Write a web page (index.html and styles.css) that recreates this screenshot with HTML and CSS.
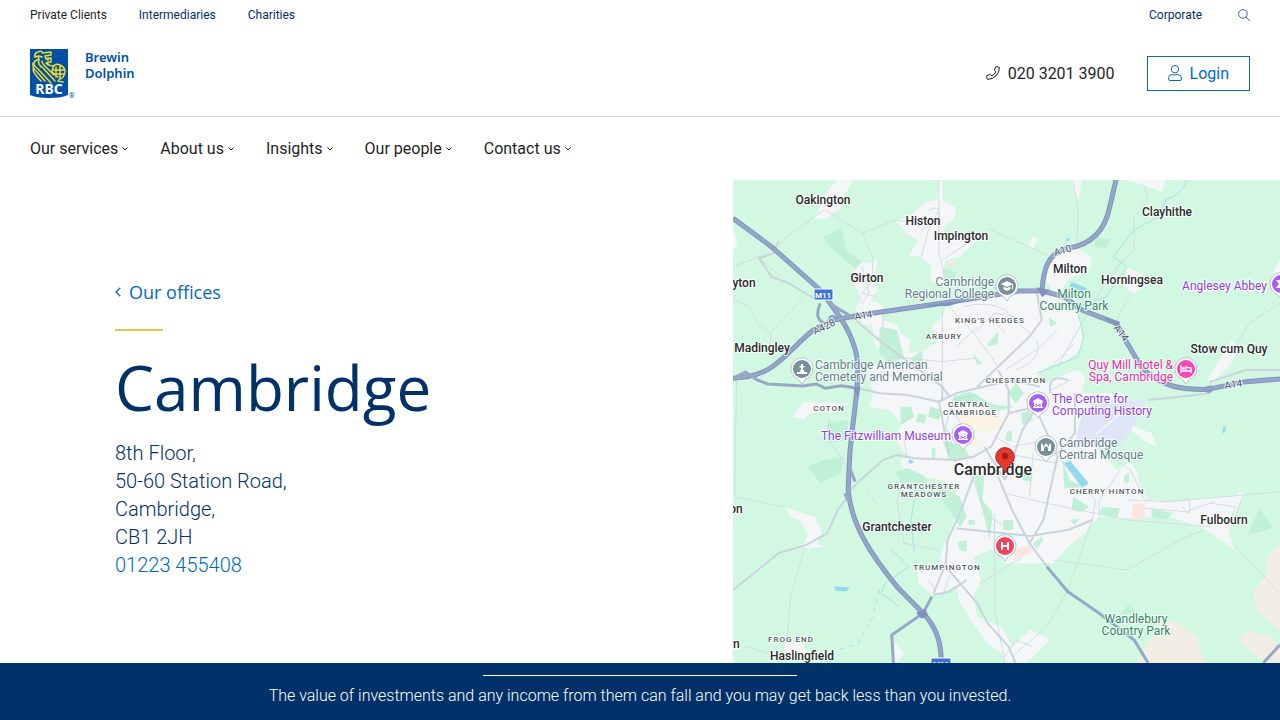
FILE: index.html
```html
<!DOCTYPE html>
<html lang="en">
<head>
<meta charset="utf-8">
<meta name="viewport" content="width=device-width, initial-scale=1">
<title>Cambridge | RBC Brewin Dolphin</title>
<link rel="stylesheet" href="styles.css">
</head>
<body>
<header class="header">
  <div class="utility">
    <nav class="utility-links" aria-label="Audience">
      <a class="current" href="#">Private Clients</a>
      <a href="#">Intermediaries</a>
      <a href="#">Charities</a>
    </nav>
    <div class="utility-side">
      <a href="#">Corporate</a>
      <button class="search" type="button" aria-label="Search">
        <svg width="12" height="12" viewBox="0 0 12 12" fill="none" stroke="currentColor"><circle cx="4.9" cy="4.9" r="4.3"/><path d="M8 8l3.7 3.7"/></svg>
      </button>
    </div>
  </div>
  <div class="brand-row">
    <a class="brand" href="#" aria-label="RBC Brewin Dolphin">
      <svg class="brand-shield" width="46" height="50" viewBox="0 0 46 50">
        <path fill="#0051a5" d="M0 0h38v46Q32 49 19 49T0 46z"/>
        <g fill="none" stroke="#f4dc2c" stroke-width="1.5" stroke-linecap="round" stroke-linejoin="round">
          <path d="M5 8Q4 4 8 3q3-2 5 1l8-1v3l-6 1 1 3 5-1v4l-5 1q3 3 8 3"/>
          <path d="M5 8l3-1 1 3-4 2q-3 4 3 8l13 14M9 11q-2 4 4 8l12 13M12 12q0 3 5 7l7 7"/>
          <path d="M3 14q-1 5 4 9l8 9M3 20q0 4 8 12M9 7l3 1M18 9v3"/>
          <path d="M23 18q2-4 7-2 5 2 5 7-1 6-5 7l-2 2 5 1M23 18l-1 5 6 5M26 18v10M30 17v12M22 21h13M23 25h11"/>
        </g>
        <text class="brand-rbc" x="19" y="45" text-anchor="middle">RBC</text>
        <text class="brand-reg" x="39" y="49">®</text>
      </svg>
      <span class="brand-name">Brewin<br>Dolphin</span>
    </a>
    <div class="contact">
      <a class="phone" href="tel:02032013900">
        <svg width="14" height="14" viewBox="0 0 14 14" fill="none" stroke="currentColor" stroke-linejoin="round"><path d="M10.3.6l2.6.6q.5.1.5.6-.1 4.8-3.4 8.1t-8.200 3.500q-.5 0-.6-.5L.6 10.300q-.1-.5.4-.7l2.800-1.200q.4-.2.700.2l1.200 1.400Q8.500 8.700 9.900 5.800L8.600 4.600q-.4-.3-.2-.7L9.600 1q.2-.5.700-.4z"/></svg>
        020 3201 3900
      </a>
      <a class="login" href="#">
        <svg width="14" height="16" viewBox="0 0 14 16" fill="none" stroke="currentColor"><circle cx="7" cy="4.200" r="3.700"/><path d="M4.200 9.500Q.6 9.800.5 13.200v.8q0 1.500 1.500 1.500h10q1.500 0 1.500-1.500v-.8q-.1-3.400-3.700-3.700-2.800 1-5.600 0z"/></svg>
        Login
      </a>
    </div>
  </div>
  <nav class="main-nav" aria-label="Main">
    <a href="#">Our services<svg class="chevron" viewBox="0 0 6 4"><path d="M.5.500L3 3l2.500-2.500"/></svg></a>
    <a href="#">About us<svg class="chevron" viewBox="0 0 6 4"><path d="M.5.500L3 3l2.500-2.500"/></svg></a>
    <a href="#">Insights<svg class="chevron" viewBox="0 0 6 4"><path d="M.5.500L3 3l2.500-2.500"/></svg></a>
    <a href="#">Our people<svg class="chevron" viewBox="0 0 6 4"><path d="M.5.500L3 3l2.500-2.500"/></svg></a>
    <a href="#">Contact us<svg class="chevron" viewBox="0 0 6 4"><path d="M.5.500L3 3l2.500-2.500"/></svg></a>
  </nav>
</header>

<main class="office">
  <section class="office-info">
    <a class="back" href="#"><svg width="6" height="10" viewBox="0 0 6 10" fill="none" stroke="currentColor" stroke-width="1.300"><path d="M5.300.7L1 5l4.300 4.300"/></svg>Our offices</a>
    <h1 class="office-title">Cambridge</h1>
    <address class="address">
      8th Floor,<br>
      50-60 Station Road,<br>
      Cambridge,<br>
      CB1 2JH<br>
      <a href="tel:01223455408">01223 455408</a>
    </address>
  </section>
  <section class="map" aria-label="Map of Cambridge">
    <svg class="map-canvas" viewBox="733 180 547 483" preserveAspectRatio="xMidYMid slice">
      <defs>
        <path id="pin" d="M0 15L-3.500 10.200A11 11 0 1 1 3.500 10.200z"/>
      </defs>
      <rect class="land" x="733" y="180" width="547" height="483"/>
      <g class="terrain" transform="translate(733 180) scale(.34885 .33333)">
        <g class="urban">
          <path d="M300 0h45l-20 35-25 25 10 25-25 15-20 18-35-3 15-25 15-45z"/>
          <path d="M590 0h10v60l40 25-5 30-30 25v40l85-10 30-5-30 25-40 40-40 10-10 40 15 20-25 10-25-10 5-40-30-30-35-2 15-28 10-20-35-20-30-40 35-5 35-35 20-15 30-5z"/>
          <path d="M370 245l25 5 20-15-5 35-15 25 20 35-20 30 35 15v45l40 15 10 25 30 20-10 40 50-10 40-30-20-40 30-30 15-35 185-30 80-15 20 10 60 30 25 30 15 50v50l-40 40-60 20-40 40 40 10 30-20 60-20 20 20-10 50h120v25h-80l-40 35-15 60 55 40 60 70 40-25 20 35 5 40 25 40 100 5 60-10 90-5 10-15 15 5-25 60-20 60 20 50-40-30-60-40-90-30-140 5-60-5-30 30-10 20-50 40-40 50h-140l-10-50-80 30 20 70-20 50 10 60 70 30 30 60 50-50 60 30-40 40-30 29h-60l-10-29-50-40-70-110-10-55-60 35-50-40v-40l60-20 10-40 20-50 20-60v-70l-40-30-110-20-10-40 20-15-30-35 10-60-30-40-60-10 10-30-5-50-15-40 70-10 40-10-80-40-10-40v-25h-30l-20-50 20-30-20-40-5-40z"/>
          <path d="M910 230l70-30 50 35-10 35-60 30-30 45-30-35-10-20zM970 0h30l-10 60-10-20zM1130 260l70 40-50 40-30-20zM1130 0h110l-10 35-40-15zM200 665l130 5-30 25-80 5-15 20-35-10zM150 980l50 20 35 10 20 50-15 30 25 10-65 5 15-45-25-40-25-10zM1430 480l20 20-20 50-50 50h-20l40-70zM150 1385l50 5 15 30-35 20h-40zM460 1380l30 40-20 29-10-9zM0 150l10 20v30l-10 10zM1568 240v70l-23-30zM1140 700l10 40 50 20 15 40-25-10-50-40zM860 170l15 5-15 30-15-8z"/>
        </g>
        <path class="beige" d="M1160 1449l30-69 70-60 70 50 20 79zM1450 1380l20-30 70 20 28 30v49h-38l-50-39zM1568 1090l-38 40v50l-40 60 10 50 68 60z"/>
        <path class="sand" d="M640 705l60-10 70 20 20-10-20 40-50 10-70-25zM680 760l30 10-10 30-25-10z"/>
        <path class="blush" d="M1145 975l35-5v45l-35 5zM805 1110l55-15-10 25-40 15zM610 250l30-5-15 20z"/>
        <g class="park">
          <path d="M260 170l50-25 15 65 45 35-20 20-85-75zM270 730l60-10v60l-60 10zM215 860l45-20 60-10-10 50-60 30zM1040 170l45 10-15 25-35-5zM1510 980l35 65-70 20zM1135 1270l25 30-50 5z"/>
          <path d="M480 680h30l10 30-40 25zM565 680l35 10-10 30-30-10zM530 700l25 5-5 25-25-5zM500 865l45 20 15 25-80-5-15-30zM590 920l60 30 20 60-20 30-50-80zM690 880l30 10-5 70 30 40-10 80-15-70-20-80zM730 490l30-35v35l-30 10zM685 520l30 30-15 5zM905 410l25 20-20 10zM810 610l25 30-25 30-20-30zM825 700l25-10 10 30-30 15zM785 755l15-5v35l-20-5zM510 535l35-25-5 40-20 5zM630 650l50-15 70 40 60 5-60 15-50-30-60 10zM600 780l60 20 20 30-60 10zM570 805h10v35h-10zM775 1020h28v30h-28zM860 1090l25-20 5 10-20 25zM645 1085l25-5v35l-20-5zM945 840l20 60 40 20-55 5zM975 950l45 30-20 15-30-5zM965 1020l30-5-15 20zM1060 980l50 5-10 30-50-15zM1200 985l60 15-20 20-40-10zM675 1020h18v15h-18zM1120 890l15-15v35h-12zM830 870l30 10-5 25-25-5z"/>
          <path d="M420 440l50 10 20 80-40 20-30-30zM600 265l40 10-10 45-25-10z"/>
        </g>
        <path class="airfield" d="M1040 661h145l-40 80-40 60h-130l30-100z"/>
        <path class="runway" d="M1040 762l70-60"/>
        <path class="water" d="M948 850l18-8 54 68-20 14zM970 305l45 20-10 10-40-15zM1405 742l8-5-2 20-8 2zM290 1220l45 2-10 12-30-2zM505 838l12 4-4 9-10-3zM955 175h10v8h-10z"/>
        <g class="river">
          <path d="M1300 0q-10 40-60 60l-20 50-70 40-60 80 40 30-60 90-85 30 20 90-15 60-120 50M700 645q-40 5-70 15l-20 80 20 60M520 960l-10 60 10 100M455 1110l50 50-70 50-10 30 50 40"/>
          <path class="dash" d="M420 1230l-20 80-40 80-60 20"/>
        </g>
        <g class="lane">
          <path d="M265 90l105 70 30 70v70l-30 40 40 10M370 160l95-40 35 5M590 0v220l20 80M730 145l170 80M975 0l15 100-5 90M1180 20l10 40-40 50v100l-60 60M1120 240l-60 80-130 240M0 260l100-40 30-30L260 90M0 360l50 20 20 50 40 30M105 500l5-45 90-100M10 600L5 950l135 30M205 1105l-40 145-10 130M275 710v70l70 110M920 1140l210 30 150-90 70-30M1430 1090l138 150M1568 370l-88 60-40 70M1030 1020l-70 210-60 110-100 90M750 1000v290l30 159M710 1210l120-80M40 1400l90 30M380 930l40 50M1140 340l-50 100M160 310l-90-80M430 400v60l-20 20M490 890l-20 70 20 130 100 20M600 240l100-70"/>
          <path d="M540 230l20-80 30-60M560 90q40-20 30 30l-50 30M370 260l20 80-20 30M450 530l150 15 90-10M600 375v245M620 380l70 80 70 100M690 460l60-60 60 10M660 380q70-20 120 10l80 80M640 500l60-60M870 480q20 60-60 90M730 400l50 60M860 820l-10 130M780 820l150 30M750 770l50 30 100-20M780 940l120 30 230 50 240 20M1040 800l100 70 40 90M940 840l60 80 40 40-10 60M930 690l-20-60 60-30M1130 960l120 5 318-30M1180 985l120 10 80-30M1290 960q20-20 20 20t-20 0M1430 1040l30-90M1110 870l-60 90v60M690 900l30 100 60 40M630 840l60 60M500 830l-10-50 50-20M620 680l40 60-50 60M700 700l60 10M930 450l-60 60-90 60M980 490l-60 60M1370 970l70 10-20 60M910 240l60 50M780 1430l30-50 50 20M620 1190l-20 60M560 1200l20 30"/>
        </g>
        <g class="road-minor">
          <path d="M130 185l-15 35-40 15 35 55 50 20 80 50M340 410l90 80 170 130 20 30M360 625l60 15 80 5 90 20 50-25 60-15 100-25 80 20M330 940l25-30 75-70 40-15 50 10 120 5 50-10 50-30 50-100v-70l-30-60M330 950l-30 40-30 70-60 35-80 25-130 110M575 1240l35-90 5-70 35-80 40-110M575 1245l45-10 50-35M610 1160l90 110 30 60 60 70 20 49M760 890l40 100 50 100 50 70M640 1045l210 23 110-18 70-30M850 1090l40-70 40-190-60-140M870 330l15 90-35 50-90 90-60 60M780 900l50-150 40-70 30-20M790 700l80-20 30-30M720 800l60 100M590 665l15 80 15 80M980 640v120l-50 60M1190 660l90-10 85-10 5-35 100-35h98M600 620v45M960 600q-60-20-50 40M280 380l60 30"/>
        </g>
        <g class="road-casing">
          <path d="M0 115l110 85 140 130C300 400 340 450 355 530c10 70-10 170-20 290l-5 110c10 110 70 200 140 290l75 80c45 50 52 100 52 149M0 595l40-5c80-10 120-80 190-140l60-30 60-12 50-8 200-30 150-25 70-12 60-1 70 18 50 40 100 40 30 60 40 70c50 60 120 70 190 68l110-23 98-8M1098 0l-18 80c-15 80-60 115-120 125-60 15-70 65-74 125"/>
        </g>
        <g class="road">
          <path d="M0 115l110 85 140 130C300 400 340 450 355 530c10 70-10 170-20 290l-5 110c10 110 70 200 140 290l75 80c45 50 52 100 52 149M0 595l40-5c80-10 120-80 190-140l60-30 60-12 50-8 200-30 150-25 70-12 60-1 70 18 50 40 100 40 30 60 40 70c50 60 120 70 190 68l110-23 98-8M1098 0l-18 80c-15 80-60 115-120 125-60 15-70 65-74 125"/>
        </g>
        <g class="road-link">
          <path d="M10 590l25-14 35 24 30 12 100 6 40-6 25 13 45-8 50 8M250 370q-20 50 15 60M545 1300l-90 65 5 84M540 1310l30-60M900 1160l60 75 90 65 100 80 40 69M1520 1449l48-55M270 365l70 45M330 960l-10-20M350 905l-15-40"/>
        </g>
        <g class="junction"><circle cx="285" cy="417" r="9"/><circle cx="1364" cy="628" r="8"/></g>
        <path class="interchange" d="M525 1298l25-12 10 20-20 10zM870 322l40 8-24 22zM1060 412l50 14-10 14zM540 378l130-18-50 18zM345 625l20-8-5 40z"/>
      </g>

      <g class="shield">
        <rect x="814" y="289" width="19" height="11" rx="1"/><text x="823" y="298">M11</text>
        <rect x="931" y="658" width="20" height="12" rx="1"/><text x="941" y="667">M11</text>
      </g>
      <g class="road-name">
        <text transform="translate(855 320) rotate(-8)">A14</text>
        <text transform="translate(815 335) rotate(-26)">A428</text>
        <text transform="translate(1055 256) rotate(-16)">A10</text>
        <text transform="translate(1113 328) rotate(52)">A14</text>
        <text transform="translate(1225 389) rotate(-8)">A14</text>
      </g>
      <g class="town">
        <text x="823" y="204">Oakington</text>
        <text x="923" y="225">Histon</text>
        <text x="961" y="240">Impington</text>
        <text x="1167" y="216">Clayhithe</text>
        <text x="867" y="282">Girton</text>
        <text x="1070" y="273">Milton</text>
        <text x="1132" y="284">Horningsea</text>
        <text x="744" y="287">yton</text>
        <text x="762" y="352">Madingley</text>
        <text x="1229" y="353">Stow cum Quy</text>
        <text x="736" y="513">on</text>
        <text x="897" y="531">Grantchester</text>
        <text x="1224" y="524">Fulbourn</text>
        <text x="733" y="648">on</text>
        <text x="802" y="660">Haslingfield</text>
      </g>
      <text class="city" x="993" y="475">Cambridge</text>
      <g class="district">
        <text x="990" y="323">KING'S HEDGES</text>
        <text x="944" y="339">ARBURY</text>
        <text x="1016" y="383">CHESTERTON</text>
        <text x="969" y="407">CENTRAL</text>
        <text x="970" y="415">CAMBRIDGE</text>
        <text x="829" y="411">COTON</text>
        <text x="924" y="489">GRANTCHESTER</text>
        <text x="924" y="497">MEADOWS</text>
        <text x="1107" y="494">CHERRY HINTON</text>
        <text x="947" y="570">TRUMPINGTON</text>
        <text x="791" y="642">FROG END</text>
      </g>
      <g class="place green">
        <text x="1074" y="298">Milton</text><text x="1074" y="310">Country Park</text>
        <text x="1136" y="623">Wandlebury</text><text x="1136" y="635">Country Park</text>
      </g>
      <g class="place slate end">
        <text x="994" y="286">Cambridge</text><text x="994" y="298">Regional College</text>
      </g>
      <g class="place slate start">
        <text x="815" y="369">Cambridge American</text><text x="815" y="381">Cemetery and Memorial</text>
        <text x="1059" y="447">Cambridge</text><text x="1059" y="459">Central Mosque</text>
      </g>
      <g class="place violet end">
        <text x="1267" y="290">Anglesey Abbey</text>
        <text x="951" y="440">The Fitzwilliam Museum</text>
      </g>
      <g class="place violet start">
        <text x="1052" y="403">The Centre for</text><text x="1052" y="415">Computing History</text>
      </g>
      <g class="place pink end">
        <text x="1173" y="369">Quy Mill Hotel &amp;</text><text x="1173" y="381">Spa, Cambridge</text>
      </g>

      <g class="poi">
        <g transform="translate(1007 286)"><use class="pin-back" href="#pin"/><circle r="9" fill="#78909c"/><path fill="#fff" d="M0-5l6 3-6 3-6-3zM-3.500.5L0 2.300 3.500.5v2.700L0 5l-3.500-1.800zM5-1.500h1V3H5z"/></g>
        <g transform="translate(802 369)"><use class="pin-back" href="#pin"/><circle r="9" fill="#78909c"/><path fill="#fff" d="M-1-5h2v2h1.500v1.500H1V1h1v2h3v2H-5V3h3V1h1v-2.500h-1.500V-3H-1z"/></g>
        <g transform="translate(1046 447)"><use class="pin-back" href="#pin"/><circle r="9" fill="#78909c"/><path fill="#fff" d="M-5 4v-6l1-2 1 2v2l3-4 3 4v-2l1-2 1 2v6H2V1.500a2 2 0 0 0-4 0V4z"/></g>
        <g transform="translate(963 435)"><use class="pin-back" href="#pin"/><circle r="9" fill="#a961f5"/><path fill="#fff" d="M0-5l5 3v1.500H-5V-2zM-4-.5h8V4h1v1H-5V4h1z"/><path stroke="#a961f5" fill="none" d="M-2 4V1l2 2 2-2v3"/></g>
        <g transform="translate(1038 403)"><use class="pin-back" href="#pin"/><circle r="9" fill="#a961f5"/><path fill="#fff" d="M0-5l5 3v1.500H-5V-2zM-4-.5h8V4h1v1H-5V4h1z"/><path stroke="#a961f5" fill="none" d="M-2 4V1l2 2 2-2v3"/></g>
        <g transform="translate(1281 284)"><use class="pin-back" href="#pin"/><circle r="9" fill="#a961f5"/><path fill="#fff" d="M-5-4h6L-1 0l3 4h-7l3-4z"/></g>
        <g transform="translate(1186 369)"><use class="pin-back" href="#pin"/><circle r="9" fill="#f646b7"/><path stroke="#fff" stroke-width="1.300" fill="none" d="M-5-4v8M-5 2H5M5 4v-5L0-2v4"/><circle cx="-2.500" cy="-.8" r="1.500" fill="#fff"/></g>
        <g transform="translate(1005 546)"><use class="pin-back" href="#pin"/><circle r="9" fill="#f0435c"/><path stroke="#fff" stroke-width="2" fill="none" d="M-3-4v8M3-4v8M-3 0h6"/></g>
      </g>
      <path class="marker" d="M1005 473q-1-6-6-9a9.300 9.300 0 1 1 12 0q-5 3-6 9z"/>
      <circle cx="1005" cy="456" r="3.200" fill="#a51d16"/>
    </svg>
  </section>
</main>

<aside class="notice">
  <p>The value of investments and any income from them can fall and you may get back less than you invested.</p>
</aside>
</body>
</html>
```
FILE: styles.css
```css
* {
  box-sizing: border-box;
}

body {
  display: flex;
  flex-direction: column;
  min-height: 100vh;
  margin: 0;
  background: #fff;
  color: #1f1f1f;
  font-family: Roboto, "Liberation Sans", sans-serif;
  font-size: 16px;
}

a {
  color: inherit;
  text-decoration: none;
}

.utility {
  display: flex;
  justify-content: space-between;
  align-items: center;
  height: 30px;
  padding: 0 30px;
  color: #003168;
  font-size: 12px;
}

.utility-links {
  display: flex;
  gap: 32px;
}

.utility .current {
  color: #1f1f1f;
}

.utility-side {
  display: flex;
  align-items: center;
  gap: 36px;
}

.search {
  display: flex;
  padding: 0;
  border: 0;
  background: none;
  color: #4a6089;
}

.brand-row {
  display: flex;
  justify-content: space-between;
  align-items: center;
  height: 87px;
  padding: 0 30px;
  border-bottom: 1px solid #d6d6d6;
}

.brand {
  display: flex;
  gap: 9px;
  padding-top: 2px;
}

.brand-shield {
  display: block;
}

.brand-rbc {
  fill: #fff;
  font: bold 14px "Noto Sans", sans-serif;
}

.brand-reg {
  fill: #0051a5;
  font: 7px Roboto, sans-serif;
}

.brand-name {
  color: #0051a5;
  font: 600 13px/16px "Noto Sans", sans-serif;
}

.contact {
  display: flex;
  align-items: center;
  gap: 32px;
}

.phone,
.login {
  display: flex;
  align-items: center;
  gap: 8px;
}

.login {
  height: 35px;
  padding: 0 20px;
  border: 1px solid #006ac3;
  color: #006ac3;
}

.main-nav {
  display: flex;
  align-items: center;
  gap: 32px;
  height: 63px;
  padding: 0 30px;
}

.main-nav a {
  display: flex;
  align-items: center;
  gap: 4px;
}

.chevron {
  width: 6px;
  height: 4px;
  fill: none;
  stroke: currentColor;
}

.office {
  display: grid;
  flex: 1;
  grid-template-columns: 733fr 547fr;
}

.office-info {
  padding: 99px 32px 80px 115px;
  color: #003168;
}

.back {
  display: flex;
  align-items: center;
  gap: 8px;
  color: #006ac3;
  font: 18px/26px "Open Sans", sans-serif;
}

.office-title {
  margin: 0;
  font: 400 62px/72px "Open Sans", sans-serif;
}

.office-title::before {
  content: "";
  display: block;
  width: 48px;
  height: 2px;
  margin: 24px 0 20px;
  background: #e8c54a;
}

.address {
  margin-top: 16px;
  font-size: 20px;
  font-style: normal;
  font-weight: 300;
  line-height: 28px;
}

.address a {
  color: #006ac3;
}

.map {
  position: relative;
  overflow: hidden;
  background: #d3f8e2;
}

.map-canvas {
  position: absolute;
  width: 100%;
  height: 100%;
}

.terrain path,
.terrain circle {
  vector-effect: non-scaling-stroke;
}

.land { fill: #d3f8e2; }
.urban { fill: #f5f6f7; }
.beige { fill: #f3eee4; }
.sand { fill: #fbf3e3; }
.blush { fill: #fbe3df; }
.park { fill: #c0f1d7; }
.airfield { fill: #dde5f7; }
.water { fill: #90daee; }
.runway { stroke: #f1f4fb; stroke-width: 2px; }

.river,
.lane,
.road-minor,
.road-casing,
.road,
.road-link,
.junction {
  fill: none;
  stroke-linejoin: round;
}

.river { stroke: #a5e3e6; }
.dash { stroke-dasharray: 5 4; }
.lane { stroke: #d3dde3; }
.road-minor { stroke: #cad3de; stroke-width: 2px; }
.road-casing { stroke: #8093b9; stroke-width: 5px; }
.road { stroke: #94a7cb; stroke-width: 3px; }
.road-link { stroke: #97a8c6; stroke-width: 3px; }
.junction { stroke: #8b9ec4; stroke-width: 2px; }
.interchange { fill: #8193bb; }

.shield rect {
  fill: #3d73d1;
  stroke: #fff;
}

.shield text {
  fill: #fff;
  font-size: 8px;
  font-weight: 700;
  text-anchor: middle;
}

.road-name,
.town,
.city,
.district,
.place {
  paint-order: stroke;
  stroke: #fffc;
  stroke-width: 2px;
  stroke-linejoin: round;
}

.road-name {
  fill: #48566a;
  font-size: 10px;
}

.town {
  fill: #2b2b2e;
  font-size: 12px;
  font-weight: 500;
  text-anchor: middle;
}

.city {
  fill: #2b2b2e;
  font-size: 16px;
  font-weight: 500;
  text-anchor: middle;
}

.district {
  fill: #505760;
  font-size: 8px;
  font-weight: 500;
  letter-spacing: 1px;
  text-anchor: middle;
}

.place {
  font-size: 12px;
  text-anchor: middle;
}

.end { text-anchor: end; }
.start { text-anchor: start; }
.green { fill: #2f8563; }
.slate { fill: #627d8c; }
.violet { fill: #8d43e0; }
.pink { fill: #e02fa4; }

.pin-back {
  fill: #fff;
  stroke: #b9c3c9;
}

.marker {
  fill: #e43a2f;
  stroke: #b8231b;
}

.notice {
  position: sticky;
  bottom: 0;
  display: flex;
  flex-direction: column;
  align-items: center;
  padding: 12px 30px 14px;
  background: #003168;
  color: #fff;
}

.notice::before {
  content: "";
  width: 314px;
  height: 1px;
  margin-bottom: 10px;
  background: #fff;
}

.notice p {
  margin: 0;
  font-weight: 300;
  line-height: 20px;
  text-align: center;
}
```
